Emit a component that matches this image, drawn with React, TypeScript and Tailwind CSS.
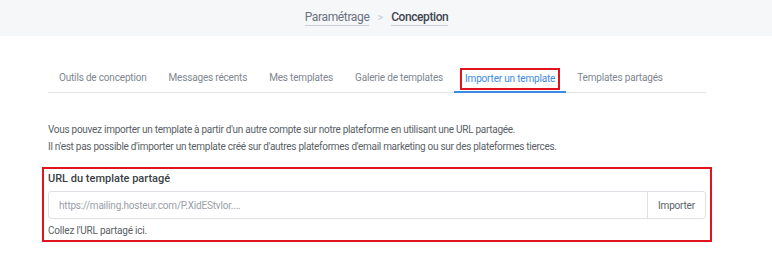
const tabs = [
  "Outils de conception",
  "Messages récents",
  "Mes templates",
  "Galerie de templates",
  "Importer un template",
  "Templates partagés",
];

export default function App() {
  return (
    <div className="min-h-[268px] w-[772px] bg-white font-['Roboto',sans-serif]">
      <div className="flex h-[36px] items-center justify-center bg-[#f6f7f9] pr-[19px]">
        <span className="border-b border-[#c9ced6] pb-[1px] text-[12px] leading-[14px] tracking-[-0.03em] text-[#6b7280]">
          Paramétrage
        </span>
        <span className="mx-[8px] text-[11px] text-[#c2c7cf]">&gt;</span>
        <span className="border-b border-[#c9ced6] pb-[1px] text-[12px] font-medium leading-[14px] tracking-[-0.035em] text-[#3f4650]">
          Conception
        </span>
      </div>

      <div className="w-[706px] pl-[48px] pt-[31px]">
        <div className="flex border-b border-[#dfe3e8]">
          {tabs.map((t) => {
            const active = t === "Importer un template";
            return (
              <div
                key={t}
                className={
                  active
                    ? "-mb-px border-b-2 border-[#3b8ae6] px-[6px] pb-[1px] pt-[1px]"
                    : "px-[11px] pb-[7px] pt-[4px]"
                }
              >
                {active ? (
                  <span className="block border-2 border-[#e0141e] px-[3px] py-[2px] text-[10px] leading-[14px] tracking-[-0.018em] text-[#3b8ae6]">
                    {t}
                  </span>
                ) : (
                  <span className="block text-[10px] leading-[14px] tracking-[-0.018em] text-[#808791]">
                    {t}
                  </span>
                )}
              </div>
            );
          })}
        </div>

        <div className="mt-[28px] text-[10px] leading-[17px] tracking-[-0.028em] text-[#5a5f66]">
          <p>
            Vous pouvez importer un template à partir d'un autre compte sur notre plateforme en
            utilisant une URL partagée.
          </p>
          <p>
            Il n'est pas possible d'importer un template créé sur d'autres plateformes d'email
            marketing ou sur des plateformes tierces.
          </p>
        </div>

        <div className="-mx-[6px] mt-[12px] border-2 border-[#e0141e] px-[4px] pb-[2px] pt-[3px]">
          <div className="text-[11px] font-medium leading-[14px] text-[#3a3f45]">
            URL du template partagé
          </div>
          <div className="mt-[5px] flex h-[28px] rounded-[3px] border border-[#dde1e6]">
            <div className="flex flex-1 items-center pl-[10px] text-[10px] tracking-[-0.02em] text-[#9aa0a8]">
              https://mailing.hosteur.com/P.XidEStvlor....
            </div>
            <div className="flex w-[58px] items-center justify-center border-l border-[#dde1e6] text-[10px] tracking-[-0.02em] text-[#5a5f66]">
              Importer
            </div>
          </div>
          <div className="mt-[5px] text-[10px] leading-[14px] tracking-[-0.02em] text-[#5a5f66]">
            Collez l'URL partagé ici.
          </div>
        </div>
      </div>
    </div>
  );
}
